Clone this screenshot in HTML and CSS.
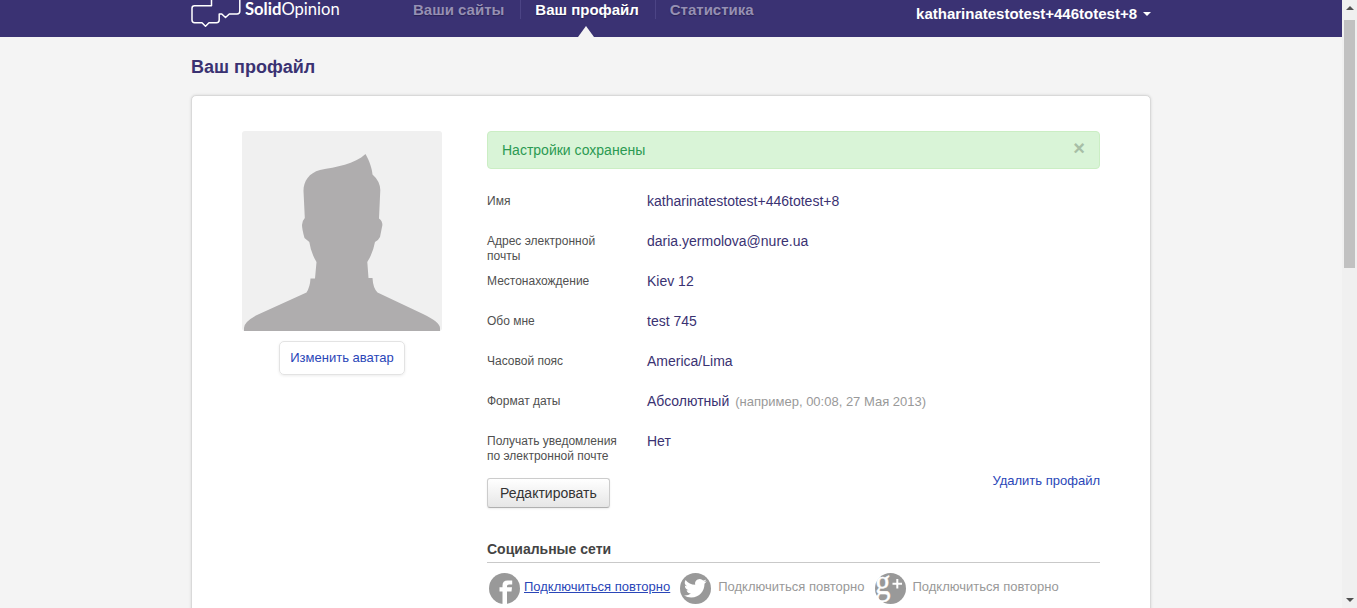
FILE: index.html
```html
<!DOCTYPE html>
<html lang="ru">
<head>
<meta charset="utf-8">
<title>SolidOpinion</title>
<link rel="stylesheet" href="styles.css">
</head>
<body>
<div class="page">
  <header class="header">
    <div class="container header-row">
      <div class="logo">
        <svg class="logo-mark" width="50" height="28" viewBox="0 0 50 28" fill="none" stroke="#fff" stroke-width="1.5" stroke-linejoin="round"><path d="M20.5 -1V5.8H3.5Q1 5.8 1 8.3V20Q1 22.7 3.7 22.7H11L14.5 26.2L18 22.7H25.5Q28.2 22.7 28.2 20V14H30.8L34.5 17.5L38.3 14H46Q48.8 14 48.8 11.3V-1"/></svg>
        <span class="logo-name"><b>Solid</b>Opinion</span>
      </div>
      <nav class="nav">
        <a class="nav-item">Ваши сайты</a>
        <a class="nav-item active">Ваш профайл</a>
        <a class="nav-item">Статистика</a>
      </nav>
      <div class="user">katharinatestotest+446totest+8<i class="caret"></i></div>
    </div>
  </header>
  <main class="container">
    <h1 class="title">Ваш профайл</h1>
    <section class="card">
      <aside class="avatar-col">
        <svg class="avatar" width="200" height="200" viewBox="0 0 200 200"><rect width="200" height="200" rx="3" fill="#f0f0f0"/><path fill="#afadae" d="M123.500 23C128 31 130 38 130.500 43.500Q138 50 138.300 59L137 87.500Q141.500 91 140 96L138 106Q136 110 133 111Q131 122 125.300 131L126.500 147H130.500Q131 157 135.500 161.500L181 183Q198 191 198 197V200H2V197Q2 191 15 184L64.500 161.500Q68 156 68.500 147.500H73L74.500 131Q69 122 67.300 111L62.500 107Q60 98 60 94Q60 90 62.800 87L61.500 60C61.500 50 67 42 78 39C94 36 113 33 123.500 23Z"/></svg>
        <a class="avatar-button">Изменить аватар</a>
      </aside>
      <div class="details">
        <div class="alert"><span>Настройки сохранены</span><span class="close">×</span></div>
        <dl class="fields">
          <div class="field"><dt>Имя</dt><dd>katharinatestotest+446totest+8</dd></div>
          <div class="field"><dt>Адрес электронной почты</dt><dd>daria.yermolova@nure.ua</dd></div>
          <div class="field"><dt>Местонахождение</dt><dd>Kiev 12</dd></div>
          <div class="field"><dt>Обо мне</dt><dd>test 745</dd></div>
          <div class="field"><dt>Часовой пояс</dt><dd>America/Lima</dd></div>
          <div class="field"><dt>Формат даты</dt><dd>Абсолютный<span class="hint">(например, 00:08, 27 Мая 2013)</span></dd></div>
          <div class="field"><dt>Получать уведомления по электронной почте</dt><dd>Нет</dd></div>
        </dl>
        <div class="actions"><button class="edit">Редактировать</button><a class="remove">Удалить профайл</a></div>
        <h2 class="subtitle">Социальные сети</h2>
        <div class="socials">
          <a class="social facebook">
            <svg width="31" height="31" viewBox="0 0 31 31"><circle cx="15.500" cy="15.500" r="15.500" fill="#999"/><path fill="#fff" d="M13.500 31V18.500H10.500V14.300H13.500V12.500Q13.500 7.500 18.500 7.500H23.200V11.500H20Q18 11.500 18 13V14.300H23L22.500 18.500H18V31Z"/></svg>
            <span>Подключиться повторно</span>
          </a>
          <a class="social twitter">
            <svg width="31" height="31" viewBox="0 0 31 31"><circle cx="15.500" cy="15.500" r="15.500" fill="#999"/><path fill="#fff" transform="translate(4 3.900) scale(.95)" d="M23.950 4.570a10 10 0 0 1-2.820.77 4.960 4.960 0 0 0 2.160-2.720 9.900 9.900 0 0 1-3.120 1.190 4.920 4.920 0 0 0-8.380 4.480C7.690 8.100 4.070 6.130 1.640 3.160a4.920 4.920 0 0 0 1.520 6.570 4.900 4.900 0 0 1-2.230-.61v.06a4.920 4.920 0 0 0 3.950 4.830 5 5 0 0 1-2.210.08 4.940 4.940 0 0 0 4.600 3.420A9.870 9.870 0 0 1 0 19.540a14 14 0 0 0 7.550 2.210c9.050 0 14-7.500 14-13.980 0-.21 0-.42-.02-.63a9.940 9.940 0 0 0 2.460-2.550z"/></svg>
            <span>Подключиться повторно</span>
          </a>
          <a class="social google">
            <svg width="31" height="31" viewBox="0 0 31 31"><circle cx="15.500" cy="15.500" r="15.500" fill="#999"/><text class="google-g" transform="translate(0 20.500) scale(.86 1)">g</text><path stroke="#fff" stroke-width="2" d="M17.500 10.800H27M22.300 6V15.600"/></svg>
            <span>Подключиться повторно</span>
          </a>
        </div>
      </div>
    </section>
  </main>
</div>
<div class="scrollbar"><i class="arrow up"></i><div class="thumb"></div><i class="arrow down"></i></div>
</body>
</html>
```
FILE: styles.css
```css
* { box-sizing: border-box; }
body {
  margin: 0;
  height: 608px;
  display: flex;
  overflow: hidden;
  background: #f4f4f4;
  font: 14px/20px "Liberation Sans", Arial, sans-serif;
  color: #3a3272;
}
.page { flex: 1; height: 608px; overflow: hidden; }
.container { width: 960px; margin: 0 auto; }

.header { height: 37px; background: #3a3273; }
.header-row { display: flex; height: 37px; }
.logo { display: flex; width: 207px; }
.logo-name { margin-left: 4px; color: #fff; font: 16.6px/18px Lato, sans-serif; }
.nav { display: flex; height: 37px; }
.nav-item {
  position: relative;
  height: 19px;
  padding: 0 15px;
  font-size: 15px;
  font-weight: bold;
  line-height: 19px;
  color: #9690b3;
  text-shadow: 0 1px 1px #292252;
  white-space: nowrap;
}
.nav-item:first-child { padding-right: 16px; }
.nav-item + .nav-item { border-left: 1px solid #4c4485; padding-left: 14px; }
.nav-item.active { padding-right: 16px; color: #fff; }
.nav-item.active::after {
  content: "";
  position: absolute;
  left: 57px;
  top: 26px;
  border: solid transparent;
  border-width: 0 8px 11px;
  border-bottom-color: #f4f4f4;
}
.user {
  display: flex;
  align-items: center;
  height: 28px;
  margin-left: auto;
  color: #fff;
  font-size: 15px;
  font-weight: bold;
}
.caret { margin-left: 6px; border: 4px solid transparent; border-top-color: #fff; border-bottom: 0; }

.title { margin: 20px 0 18px; font-size: 18px; line-height: 20px; }
.card {
  display: flex;
  height: 560px;
  padding: 35px 50px;
  background: #fff;
  border: 1px solid #d9d9d9;
  border-radius: 5px;
  box-shadow: 0 0 3px rgba(0, 0, 0, .12);
}
.avatar-col { display: flex; flex-direction: column; align-items: center; width: 200px; margin-right: 45px; }
.avatar-button {
  margin-top: 10px;
  padding: 6px 10px;
  border: 1px solid #e3e3e3;
  border-radius: 5px;
  box-shadow: 0 1px 3px rgba(0, 0, 0, .08);
  font-size: 13px;
  color: #2a46b8;
}
.details { width: 613px; }
.alert {
  display: flex;
  justify-content: space-between;
  height: 38px;
  padding: 8px 14px;
  background: #d9f4d7;
  border: 1px solid #cbeec4;
  border-radius: 4px;
  color: #2b9a52;
}
.close { font-size: 20px; font-weight: bold; line-height: 17px; color: #a7bea6; }
.fields { margin: 22px 0 0; }
.field { display: flex; height: 40px; }
.field dt { width: 160px; padding: 3px 25px 0 0; font-size: 12px; line-height: 15px; color: #505050; }
.field dd { margin: 0; }
.hint { margin-left: 6px; font-size: 13px; color: #999; }
.actions { display: flex; justify-content: space-between; align-items: flex-start; height: 68px; }
.edit {
  height: 30px;
  margin-top: 7px;
  padding: 0 12px;
  border: 1px solid #ccc;
  border-bottom-color: #b0b0b0;
  border-radius: 3px;
  background: linear-gradient(#fff, #e6e6e6);
  box-shadow: 0 1px 2px rgba(0, 0, 0, .08);
  font: 14px/20px "Liberation Sans", Arial, sans-serif;
  color: #333;
}
.remove { font-size: 13px; color: #2a46b8; }
.subtitle { margin: 0; height: 24px; border-bottom: 1px solid #c9c9c9; font-size: 14px; line-height: 20px; color: #444; }
.socials { display: flex; padding: 10px 0 0 2px; }
.social { display: flex; font-size: 13px; line-height: 28px; color: #999; white-space: nowrap; }
.social span { margin-left: 7px; }
.facebook { color: #2a46b8; text-decoration: underline; margin-right: 10px; }
.facebook span { margin-left: 4px; }
.twitter { margin-right: 10px; }
.google-g { font: 36px "Liberation Serif", serif; fill: #fff; stroke: #fff; stroke-width: .4; }

.scrollbar { display: flex; flex-direction: column; align-items: center; width: 15px; height: 608px; background: #f0f0f0; }
.arrow { border: 4px solid transparent; }
.up { margin-top: 6px; border-top: 0; border-bottom-color: #505050; }
.down { margin: auto 0 6px; border-bottom: 0; border-top-color: #505050; }
.thumb { width: 11px; height: 248px; margin-top: 10px; background: #c1c1c1; }
```
